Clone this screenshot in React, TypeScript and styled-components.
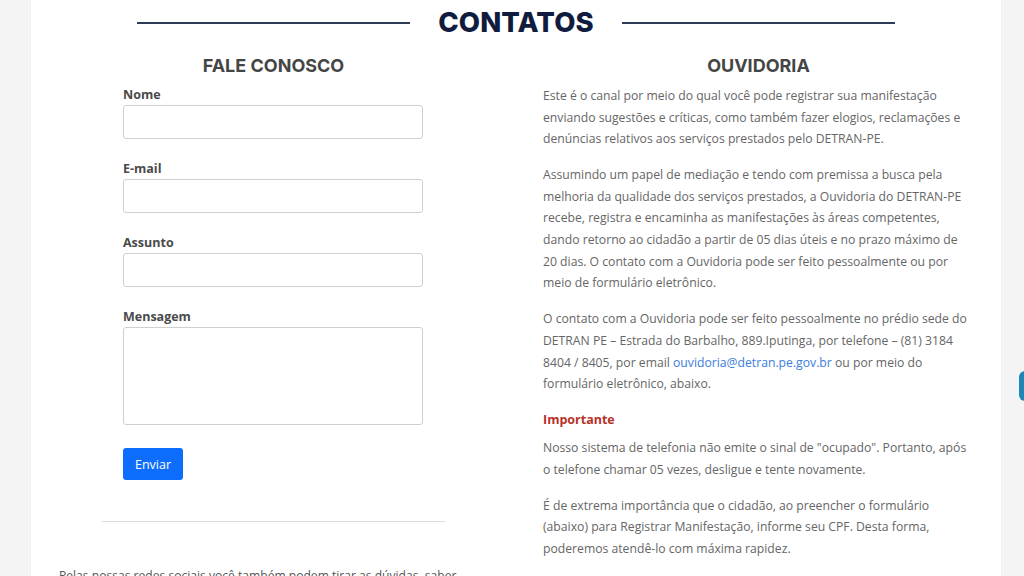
import React from "react";
import styled, { createGlobalStyle } from "styled-components";

const GlobalStyle = createGlobalStyle`
  html, body {
    margin: 0;
    height: 576px;
    overflow: hidden;
    background: #f4f4f5;
    font-family: "Open Sans", "Liberation Sans", sans-serif;
  }
`;

const Page = styled.div`
  width: 970px;
  margin-left: 31px;
  min-height: 576px;
  background: #fff;
  box-shadow: 0 0 2px rgba(0, 0, 0, 0.05);
`;

const TitleRow = styled.div`
  display: flex;
  align-items: center;
  justify-content: center;
  gap: 28px;
  padding-top: 5px;
  height: 35px;
`;

const TitleLine = styled.span`
  width: 273px;
  height: 2px;
  background: #2d3b57;
`;

const Title = styled.h1`
  margin: 0;
  font-family: Inter, "Liberation Sans", sans-serif;
  font-weight: 800;
  font-size: 27.5px;
  line-height: 35px;
  color: #101c3d;
  letter-spacing: 0.1px;
`;

const Columns = styled.div`
  display: grid;
  grid-template-columns: 485px 485px;
  margin-top: 14px;
`;

const Column = styled.section`
  display: flex;
  flex-direction: column;
`;

const Heading = styled.h2`
  margin: 0 0 7px;
  text-align: center;
  font-family: Inter, "Liberation Sans", sans-serif;
  font-weight: 700;
  font-size: 18px;
  line-height: 24px;
  color: #454545;
`;

const Form = styled.form`
  width: 300px;
  margin: 0 0 0 92px;
  padding-top: 1px;
  display: flex;
  flex-direction: column;
`;

const Field = styled.div`
  display: flex;
  flex-direction: column;
  gap: 1px;
  margin-bottom: 21px;
`;

const Label = styled.label`
  font-size: 12.5px;
  font-weight: 700;
  line-height: 18px;
  color: #4a4a4a;
`;

const Input = styled.input`
  box-sizing: border-box;
  height: 34px;
  border: 1px solid #cfcfcf;
  border-radius: 3px;
  background: #fff;
`;

const TextArea = styled.textarea`
  box-sizing: border-box;
  height: 98px;
  border: 1px solid #cfcfcf;
  border-radius: 3px;
  resize: none;
`;

const Button = styled.button`
  align-self: flex-start;
  width: 60px;
  height: 32px;
  margin-top: 2px;
  border: none;
  border-radius: 3px;
  background: #0d6efd;
  color: #fff;
  font-family: "Open Sans", "Liberation Sans", sans-serif;
  font-size: 12.5px;
`;

const Divider = styled.hr`
  width: 343px;
  margin: 41px auto 0;
  border: none;
  border-top: 1px solid #dcdcdc;
`;

const Social = styled.p`
  margin: 43px 0 0;
  padding: 0 28px;
  font-size: 12.1px;
  line-height: 21.6px;
  color: #555;
`;

const Text = styled.div`
  padding: 0 28px 0 27px;
  font-size: 12.2px;
  line-height: 21.65px;
  color: #666;

  p {
    margin: 0 0 14.2px;
  }
  a {
    color: #3b7ddd;
    text-decoration: none;
  }
`;

const Important = styled.h3`
  margin: 0 0 7px;
  font-size: 12.5px;
  font-weight: 700;
  line-height: 21px;
  color: #b83227;
`;

const SideTab = styled.div`
  position: fixed;
  right: -20px;
  top: 371px;
  width: 25px;
  height: 30px;
  border-radius: 6px;
  background: #1c86b6;
`;

const fields = ["Nome", "E-mail", "Assunto"];

export default function App() {
  return (
    <>
      <GlobalStyle />
      <Page>
        <TitleRow>
          <TitleLine />
          <Title>CONTATOS</Title>
          <TitleLine />
        </TitleRow>
        <Columns>
          <Column>
            <Heading>FALE CONOSCO</Heading>
            <Form onSubmit={(e) => e.preventDefault()}>
              {fields.map((f) => (
                <Field key={f}>
                  <Label>{f}</Label>
                  <Input type="text" />
                </Field>
              ))}
              <Field>
                <Label>Mensagem</Label>
                <TextArea />
              </Field>
              <Button type="submit">Enviar</Button>
            </Form>
            <Divider />
            <Social>
              Pelas nossas redes sociais você também podem tirar as dúvidas, saber
            </Social>
          </Column>
          <Column>
            <Heading>OUVIDORIA</Heading>
            <Text>
              <p>
                Este é o canal por meio do qual você pode registrar sua manifestação
                enviando sugestões e críticas, como também fazer elogios, reclamações e
                denúncias relativos aos serviços prestados pelo DETRAN-PE.
              </p>
              <p>
                Assumindo um papel de mediação e tendo com premissa a busca pela
                melhoria da qualidade dos serviços prestados, a Ouvidoria do DETRAN-PE
                recebe, registra e encaminha as manifestações às áreas competentes,
                dando retorno ao cidadão a partir de 05 dias úteis e no prazo máximo de
                20 dias. O contato com a Ouvidoria pode ser feito pessoalmente ou por
                meio de formulário eletrônico.
              </p>
              <p>
                O contato com a Ouvidoria pode ser feito pessoalmente no prédio sede do
                DETRAN PE – Estrada do Barbalho, 889.Iputinga, por telefone – (81) 3184
                8404 / 8405, por email{" "}
                <a href="#">ouvidoria@detran.pe.gov.br</a> ou por meio do formulário
                eletrônico, abaixo.
              </p>
              <Important>Importante</Important>
              <p>
                Nosso sistema de telefonia não emite o sinal de "ocupado". Portanto, após
                o telefone chamar 05 vezes, desligue e tente novamente.
              </p>
              <p>
                É de extrema importância que o cidadão, ao preencher o formulário
                (abaixo) para Registrar Manifestação, informe seu CPF. Desta forma,
                poderemos atendê-lo com máxima rapidez.
              </p>
            </Text>
          </Column>
        </Columns>
      </Page>
      <SideTab />
    </>
  );
}
